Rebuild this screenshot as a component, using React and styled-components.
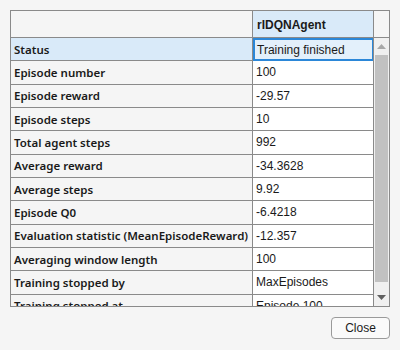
import React from 'react'
import styled, { createGlobalStyle } from 'styled-components'

const GlobalStyle = createGlobalStyle`
  html, body {
    margin: 0;
    background: #f5f5f5;
  }
  * { box-sizing: border-box; }
`

const rows = [
  ['Status', 'Training finished'],
  ['Episode number', '100'],
  ['Episode reward', '-29.57'],
  ['Episode steps', '10'],
  ['Total agent steps', '992'],
  ['Average reward', '-34.3628'],
  ['Average steps', '9.92'],
  ['Episode Q0', '-6.4218'],
  ['Evaluation statistic (MeanEpisodeReward)', '-12.357'],
  ['Averaging window length', '100'],
  ['Training stopped by', 'MaxEpisodes'],
  ['Training stopped at', 'Episode 100'],
]

const ROW_H = 23.34

const Dialog = styled.div`
  width: 400px;
  height: 350px;
  padding: 10px 10px 0 10px;
  display: flex;
  flex-direction: column;
  align-items: flex-end;
`

const Frame = styled.div`
  width: 380px;
  height: 297px;
  border: 1px solid #8a8a8a;
  display: flex;
  flex-direction: column;
  overflow: hidden;
`

const HeaderRow = styled.div`
  display: grid;
  grid-template-columns: 241px 1px 120px 1px 15px;
  height: 27px;
  border-bottom: 1px solid #8a8a8a;
  flex-shrink: 0;
`

const Divider = styled.div`
  background: #8a8a8a;
`

const HeaderCell = styled.div`
  background: ${p => (p.$active ? '#d9eaf9' : '#f5f5f5')};
  font: bold 12px 'Liberation Sans', Arial, sans-serif;
  color: #1a1a1a;
  display: flex;
  align-items: center;
  padding-left: 4px;
  padding-top: 2px;
`

const Body = styled.div`
  flex: 1;
  display: flex;
  min-height: 0;
`

const RowList = styled.div`
  width: 363px;
  overflow: hidden;
  border-right: 1px solid #8a8a8a;
`

const Row = styled.div`
  display: grid;
  grid-template-columns: 241px 1px 121px;
  height: ${ROW_H}px;
  border-bottom: 1px solid #8a8a8a;
`

const Label = styled.div`
  background: ${p => (p.$selected ? '#d9eaf9' : '#f5f5f5')};
  font: 600 11.5px 'Noto Sans', 'Open Sans', sans-serif;
  color: #1a1a1a;
  padding-left: 3px;
  display: flex;
  align-items: center;
  white-space: nowrap;
  overflow: hidden;
`

const Value = styled.div`
  background: ${p => (p.$selected ? '#e3f0fb' : '#ffffff')};
  border: ${p => (p.$selected ? '2px solid #2b87d8' : 'none')};
  margin-bottom: ${p => (p.$selected ? '-1px' : '0')};
  font: 12px 'Liberation Sans', Arial, sans-serif;
  color: #1a1a1a;
  padding-left: ${p => (p.$selected ? '2px' : '3px')};
  display: flex;
  align-items: center;
  white-space: nowrap;
  overflow: hidden;
`

const Scrollbar = styled.div`
  width: 15px;
  background: #f0f0f0;
  display: flex;
  flex-direction: column;
  align-items: center;
`

const Arrow = styled.div`
  height: 17px;
  display: flex;
  align-items: center;
  justify-content: center;
  flex-shrink: 0;
`

const Track = styled.div`
  flex: 1;
  width: 100%;
  padding: 0 1px;
  display: flex;
  flex-direction: column;
`

const Thumb = styled.div`
  background: #c1c1c1;
  height: 227px;
`

const CloseButton = styled.button`
  margin-top: 10px;
  width: 59px;
  height: 22px;
  border: 1px solid #9a9a9a;
  border-radius: 4px;
  background: #fafafa;
  font: 12px 'Liberation Sans', Arial, sans-serif;
  color: #1a1a1a;
  padding: 0;
`

const Tri = ({ up, color }) => (
  <svg width="9" height="5" viewBox="0 0 9 5">
    <polygon points={up ? '0,5 9,5 4.5,0' : '0,0 9,0 4.5,5'} fill={color} />
  </svg>
)

export default function App() {
  return (
    <>
      <GlobalStyle />
      <Dialog>
        <Frame>
          <HeaderRow>
            <HeaderCell />
            <Divider />
            <HeaderCell $active>rIDQNAgent</HeaderCell>
            <Divider />
            <HeaderCell />
          </HeaderRow>
          <Body>
            <RowList>
              {rows.map(([k, v], i) => (
                <Row key={k}>
                  <Label $selected={i === 0}>{k}</Label>
                  <Divider />
                  <Value $selected={i === 0}>{v}</Value>
                </Row>
              ))}
            </RowList>
            <Scrollbar>
              <Arrow><Tri up color="#a8a8a8" /></Arrow>
              <Track><Thumb /></Track>
              <Arrow><Tri color="#606060" /></Arrow>
            </Scrollbar>
          </Body>
        </Frame>
        <CloseButton>Close</CloseButton>
      </Dialog>
    </>
  )
}
